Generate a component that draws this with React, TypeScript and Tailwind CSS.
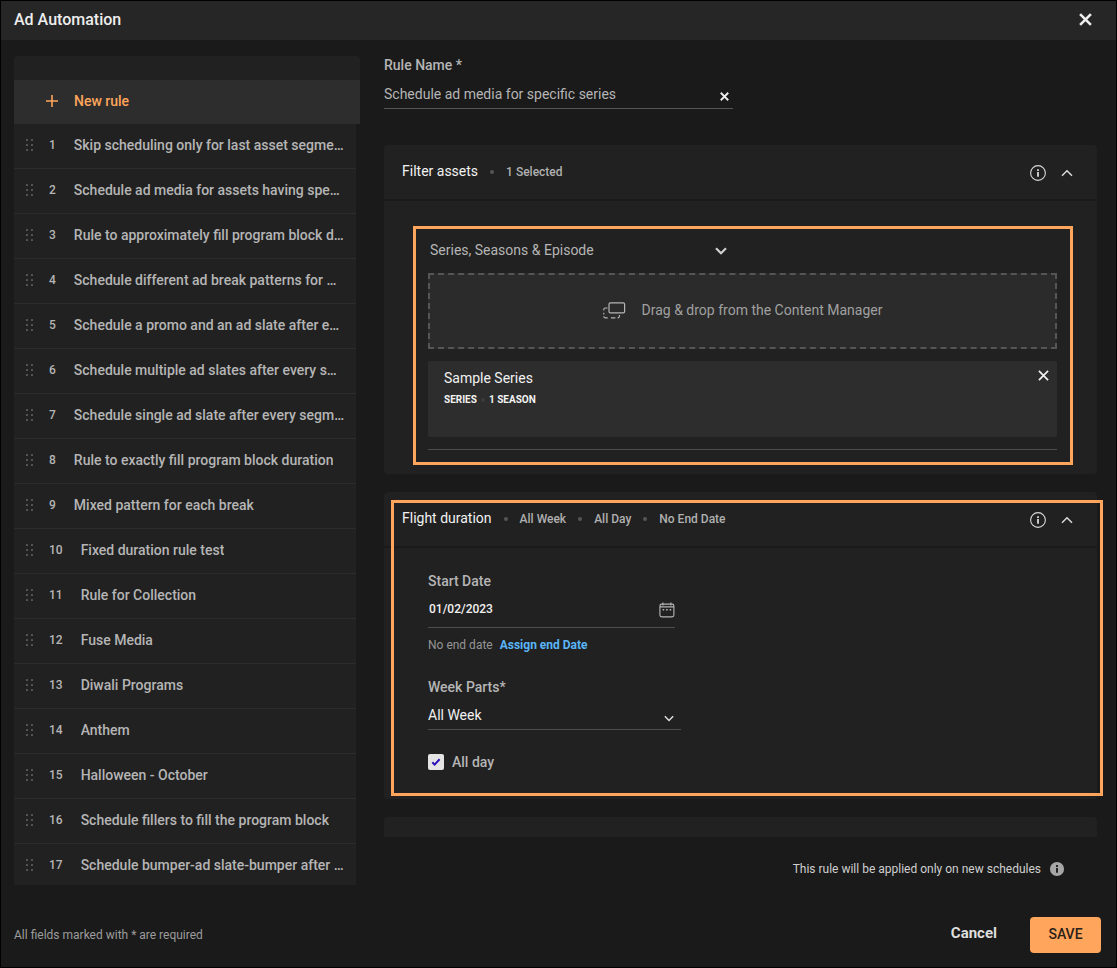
import { useState, type ReactNode } from "react";

const RULES = [
  "Skip scheduling only for last asset segme…",
  "Schedule ad media for assets having spe…",
  "Rule to approximately fill program block d…",
  "Schedule different ad break patterns for …",
  "Schedule a promo and an ad slate after e…",
  "Schedule multiple ad slates after every s…",
  "Schedule single ad slate after every segm…",
  "Rule to exactly fill program block duration",
  "Mixed pattern for each break",
  "Fixed duration rule test",
  "Rule for Collection",
  "Fuse Media",
  "Diwali Programs",
  "Anthem",
  "Halloween - October",
  "Schedule fillers to fill the program block",
  "Schedule bumper-ad slate-bumper after …",
];

function CrossIcon({ className, weight }: { className: string; weight: number }) {
  return (
    <svg viewBox="0 0 12 12" className={className} fill="none" stroke="currentColor" strokeWidth={weight} aria-hidden="true">
      <path d="M1 1l10 10M11 1L1 11" />
    </svg>
  );
}

function ChevronIcon({ className, weight }: { className: string; weight: number }) {
  return (
    <svg viewBox="0 0 12 8" className={className} fill="none" stroke="currentColor" strokeWidth={weight} aria-hidden="true">
      <path d="M1 1.3l5 5 5-5" />
    </svg>
  );
}

function GripIcon() {
  return (
    <svg viewBox="0 0 8 12" className="h-3 w-2 shrink-0 text-[#5c5c5c]" fill="currentColor" aria-hidden="true">
      {[0, 5].map((x) => [0, 5, 10].map((y) => <rect key={`${x}-${y}`} x={x} y={y} width="2" height="2" rx="0.4" />))}
    </svg>
  );
}

function InfoIcon() {
  return (
    <svg viewBox="0 0 16 16" className="size-4" fill="none" aria-hidden="true">
      <circle cx="8" cy="8" r="7.4" stroke="currentColor" strokeWidth="1.1" />
      <path d="M7.1 4.2h1.8V6H7.1zM7.1 7h1.8v4.8H7.1z" fill="currentColor" />
    </svg>
  );
}

function DragIcon() {
  return (
    <svg viewBox="0 0 23 17" className="h-[17px] w-[23px]" fill="none" stroke="#b5b5b5" aria-hidden="true">
      <rect x="6" y="0.8" width="15.6" height="10" rx="1.4" strokeWidth="1.2" />
      <path d="M4.6 6H2.4Q.8 6 .8 7.600V8.600M.8 10.800v1.800M.8 14.200Q.8 15.900 2.500 15.900h2.200M8 15.900h4.400M14.600 15.900q2 0 2-2.800" strokeWidth="1.1" />
    </svg>
  );
}

function CalendarIcon() {
  return (
    <svg viewBox="0 0 16 16" className="h-4 w-4" fill="none" stroke="#b5b5b5" aria-hidden="true">
      <rect x="0.900" y="2.100" width="14" height="12.800" rx="1.800" strokeWidth="1.100" />
      <path d="M1 4.900h14M3.900 0.500v3M11.900 0.500v3" strokeWidth="1.100" />
      <path d="M3.600 7.700h1.600M7.100 7.700h1.600M10.600 7.700h1.600" strokeWidth="1.500" />
    </svg>
  );
}

function Card({ title, tags, open, onToggle, highlight, children }: {
  title: string;
  tags: string[];
  open: boolean;
  onToggle: () => void;
  highlight?: ReactNode;
  children: ReactNode;
}) {
  return (
    <section className="relative flex flex-col gap-0.5">
      <header className="flex h-[54px] items-center rounded-t bg-[#212121] pr-6 pl-[18px]">
        <h2 className="pb-0.5 text-sm text-[#f2f2f2]">{title}</h2>
        <ul className="flex text-xs font-medium text-[#b0b0b0]">
          {tags.map((tag) => (
            <li key={tag} className="flex items-center">
              <span className="mr-3 ml-3 size-1 rounded-full bg-[#555555]" />
              {tag}
            </li>
          ))}
        </ul>
        <div className="ml-auto flex items-center gap-[15px] pt-0.5 text-[#dadada]">
          <button type="button" aria-label={`About ${title}`}><InfoIcon /></button>
          <button type="button" aria-label={`Toggle ${title}`} aria-expanded={open} onClick={onToggle}>
            <ChevronIcon weight={1.5} className={open ? "h-2 w-3 rotate-180" : "h-2 w-3"} />
          </button>
        </div>
      </header>
      {open && <div className="rounded-b bg-[#212121]">{children}</div>}
      {highlight}
    </section>
  );
}

export default function App() {
  const [name, setName] = useState("Schedule ad media for specific series");
  const [date, setDate] = useState("01/02/2023");
  const [allDay, setAllDay] = useState(true);
  const [filterOpen, setFilterOpen] = useState(true);
  const [flightOpen, setFlightOpen] = useState(true);

  return (
    <div className="flex min-h-screen flex-col border border-black bg-[#1a1a1a] font-['Roboto',sans-serif] text-sm text-[#b5b5b5]">
      <header className="flex h-[39px] items-center justify-between bg-[#262626] pr-6 pb-0.5 pl-[13px]">
        <h1 className="text-base font-medium text-[#ededed]">Ad Automation</h1>
        <button type="button" aria-label="Close" className="text-[#ededed]">
          <CrossIcon weight={2.4} className="size-[13px]" />
        </button>
      </header>

      <div className="flex gap-6 pt-4 pr-[19px] pl-[13px]">
        <aside className="w-[346px] shrink-0">
          <div className="h-6 rounded-t bg-[#212121]" />
          <button type="button" className="flex h-11 w-full items-center gap-4 bg-[#2d2d2d] pb-0.5 pl-8 font-medium text-[#ffa55c]">
            <svg viewBox="0 0 12 12" className="size-3" stroke="currentColor" strokeWidth="1.6" aria-hidden="true">
              <path d="M6 0v12M0 6h12" />
            </svg>
            New rule
          </button>
          <ol className="mr-1 bg-[#212121]">
            {RULES.map((rule, i) => (
              <li key={rule} className="flex h-[45px] items-center border-b border-[#2c2c2c] pr-2 pb-0.5 pl-3 font-medium last:h-[41px] last:border-b-0 last:pb-0">
                <GripIcon />
                <span className="mr-[18px] ml-[15px] text-xs">{i + 1}</span>
                <span className="min-w-0 truncate">{rule}</span>
              </li>
            ))}
          </ol>
        </aside>

        <main className="min-w-0 flex-1">
          <div className="relative w-[349px]">
            <label htmlFor="rule-name" className="block leading-[18px] font-medium">Rule Name *</label>
            <input
              id="rule-name"
              value={name}
              onChange={(e) => setName(e.target.value)}
              className="mt-1 block h-[31px] w-full border-b border-[#555555] pt-0.5 pr-6 outline-none"
            />
            <button type="button" aria-label="Clear rule name" onClick={() => setName("")} className="absolute right-1 bottom-2 text-[#ededed]">
              <CrossIcon weight={2.4} className="size-[9px]" />
            </button>
          </div>

          <div className="mt-9 flex flex-col gap-[18px]">
            <Card title="Filter assets" tags={["1 Selected"]} open={filterOpen} onToggle={() => setFilterOpen(!filterOpen)}>
              <div className="pt-[25px] pr-6 pb-[9px] pl-[29px]">
                <div className="border-3 border-[#ffa55c] pr-[13px] pb-3 pl-3">
                  <div className="relative mb-0.5 w-[305px]">
                    <select aria-label="Asset type" className="h-[42px] w-full appearance-none pl-0.5 outline-none">
                      <option>Series, Seasons &amp; Episode</option>
                    </select>
                    <ChevronIcon weight={2.2} className="pointer-events-none absolute top-[18px] right-1.5 h-2 w-3 text-[#d0d0d0]" />
                  </div>
                  <div className="flex h-[76px] items-center justify-center gap-4 border-2 border-dashed border-[#555555] bg-[#2b2b2b] pb-0.5 text-[#a0a0a0]">
                    <DragIcon />
                    Drag &amp; drop from the Content Manager
                  </div>
                  <article className="mt-3 flex h-[76px] items-start justify-between rounded-xs bg-[#2d2d2d] pt-2 pr-2 pl-4 text-[#f2f2f2]">
                    <div>
                      <h3 className="leading-[18px]">Sample Series</h3>
                      <p className="mt-[5px] flex items-center text-[10px] leading-4 font-bold">
                        SERIES
                        <span className="mx-1 size-1 rounded-full bg-[#3a3a3a]" />
                        1 SEASON
                      </p>
                    </div>
                    <button type="button" aria-label="Remove Sample Series" className="mt-px">
                      <CrossIcon weight={1.8} className="size-[11px]" />
                    </button>
                  </article>
                  <hr className="mt-3 border-[#4d4d4d]" />
                </div>
              </div>
            </Card>

            <Card
              title="Flight duration"
              tags={["All Week", "All Day", "No End Date"]}
              open={flightOpen}
              onToggle={() => setFlightOpen(!flightOpen)}
              highlight={<div className="pointer-events-none absolute top-2 -right-1.5 bottom-[3px] left-[7px] border-3 border-[#ffa55c]" />}
            >
              <div className="px-11 pt-[23px] pb-[27px]">
                <label htmlFor="start-date" className="block leading-5 font-medium">Start Date</label>
                <div className="relative w-[247px]">
                  <input
                    id="start-date"
                    value={date}
                    onChange={(e) => setDate(e.target.value)}
                    className="block h-[37px] w-full border-b border-[#4d4d4d] pl-px text-xs font-medium text-[#f2f2f2] outline-none"
                  />
                  <button type="button" aria-label="Open calendar" className="absolute right-0 bottom-2.5">
                    <CalendarIcon />
                  </button>
                </div>
                <p className="mt-[7px] text-xs leading-5 text-[#959595]">
                  No end date
                  <a href="#end-date" className="ml-[7px] font-bold text-[#5ab5f7]">Assign end Date</a>
                </p>
                <label htmlFor="week-parts" className="mt-[22px] block leading-5 font-medium">Week Parts*</label>
                <div className="relative w-[253px]">
                  <select id="week-parts" className="block h-[33px] w-full appearance-none border-b border-[#4d4d4d] pt-1 text-[#f2f2f2] outline-none">
                    <option>All Week</option>
                  </select>
                  <ChevronIcon weight={1.8} className="pointer-events-none absolute right-[7px] bottom-2 h-[7px] w-2.5 text-[#dedede]" />
                </div>
                <div className="relative mt-[22px] flex items-center gap-2">
                  <input
                    id="all-day"
                    type="checkbox"
                    checked={allDay}
                    onChange={(e) => setAllDay(e.target.checked)}
                    className="size-4 appearance-none rounded-xs bg-[#e4e4e4]"
                  />
                  {allDay && (
                    <svg viewBox="0 0 16 16" className="pointer-events-none absolute left-0 size-4" fill="none" stroke="#2a10b8" strokeWidth="2" aria-hidden="true">
                      <path d="M4.300 8.300l2.300 2.300 5-5.300" />
                    </svg>
                  )}
                  <label htmlFor="all-day" className="leading-5 font-medium">All day</label>
                </div>
              </div>
            </Card>

            <div className="h-5 rounded-t bg-[#212121]" />
          </div>

          <div className="mt-4 flex h-8 items-center justify-end gap-2 pr-8 text-xs text-[#cfcfcf]">
            This rule will be applied only on new schedules
            <svg viewBox="0 0 14 14" className="size-4" aria-hidden="true">
              <circle cx="7" cy="7" r="6.200" fill="#a6a6a6" />
              <path d="M6.200 3.600h1.600v1.600H6.200zM6.200 6.100h1.600v4.200H6.200z" fill="#1a1a1a" />
            </svg>
          </div>
        </main>
      </div>

      <footer className="mt-8 flex items-center pr-[15px] pb-[14px] pl-[13px]">
        <p className="text-xs text-[#9c9c9c]">All fields marked with * are required</p>
        <button type="button" className="mr-[33px] ml-auto pb-0.5 text-[15px] font-bold text-[#dedede]">Cancel</button>
        <button type="button" className="h-9 w-[71px] rounded bg-[#ffa55c] pb-0.5 font-medium text-[#2b2118]">SAVE</button>
      </footer>
    </div>
  );
}
